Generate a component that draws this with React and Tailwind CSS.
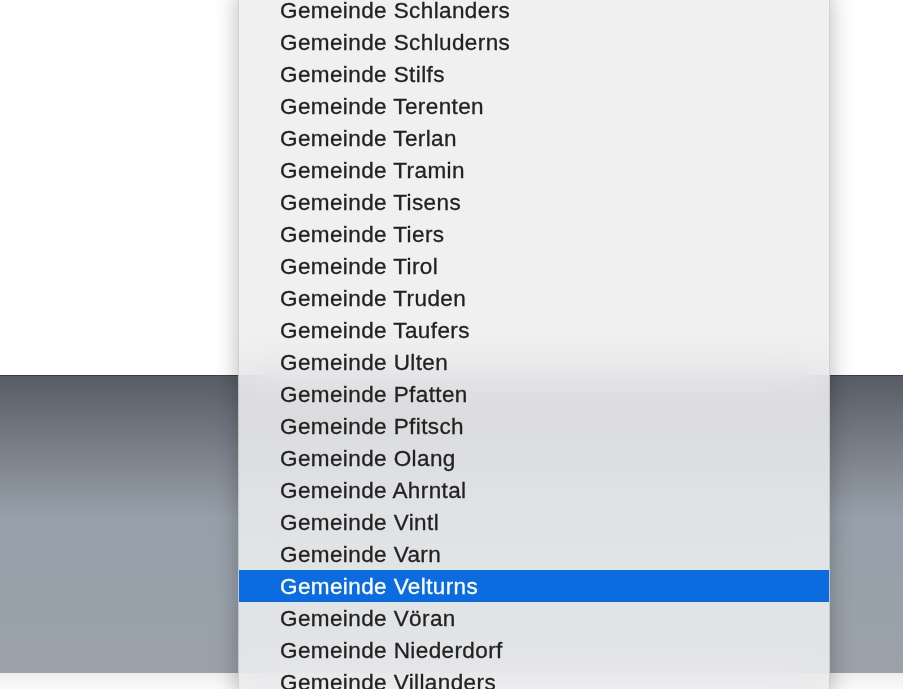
import React from 'react';

const items = [
    'Schlanders', 'Schluderns', 'Stilfs', 'Terenten', 'Terlan', 'Tramin', 'Tisens', 'Tiers',
    'Tirol', 'Truden', 'Taufers', 'Ulten', 'Pfatten', 'Pfitsch', 'Olang', 'Ahrntal',
    'Vintl', 'Varn', 'Velturns', 'Vöran', 'Niederdorf', 'Villanders',
];

const App = () => {
    const selected = 'Velturns';

    return (
        <div className="relative w-[903px] h-[689px] overflow-hidden bg-white font-['Liberation_Sans',Arial,sans-serif]">
            {/* Page behind the menu */}
            <div className="flex flex-col h-full">
                <div className="h-[375px] bg-white" />
                <div className="h-[298px] border-t border-[#3c3f44] bg-[linear-gradient(to_bottom,#575c65_0%,#7a808a_25%,#97a0aa_48%,#9aa1ab_100%)]" />
                <div className="flex-1 bg-[linear-gradient(to_bottom,#eeeeee,#fafafa)]" />
            </div>

            {/* Dropdown menu */}
            <div className="absolute left-[238px] top-[-6px] w-[592px] flex flex-col bg-[rgba(238,238,239,0.86)] backdrop-blur-xl border-x border-[rgba(0,0,0,0.12)] shadow-[0_0_22px_rgba(0,0,0,0.28)]">
                {items.map((name) => (
                    <div
                        key={name}
                        className={`h-8 flex items-center pt-[2px] pl-[41px] text-[22.5px] tracking-[0.4px] [-webkit-text-stroke:0.3px] ${name === selected
                            ? 'bg-[#0b6be0] text-white'
                            : 'text-[#222222]'
                            }`}
                    >
                        Gemeinde {name}
                    </div>
                ))}
            </div>
        </div>
    );
};

export default App;
